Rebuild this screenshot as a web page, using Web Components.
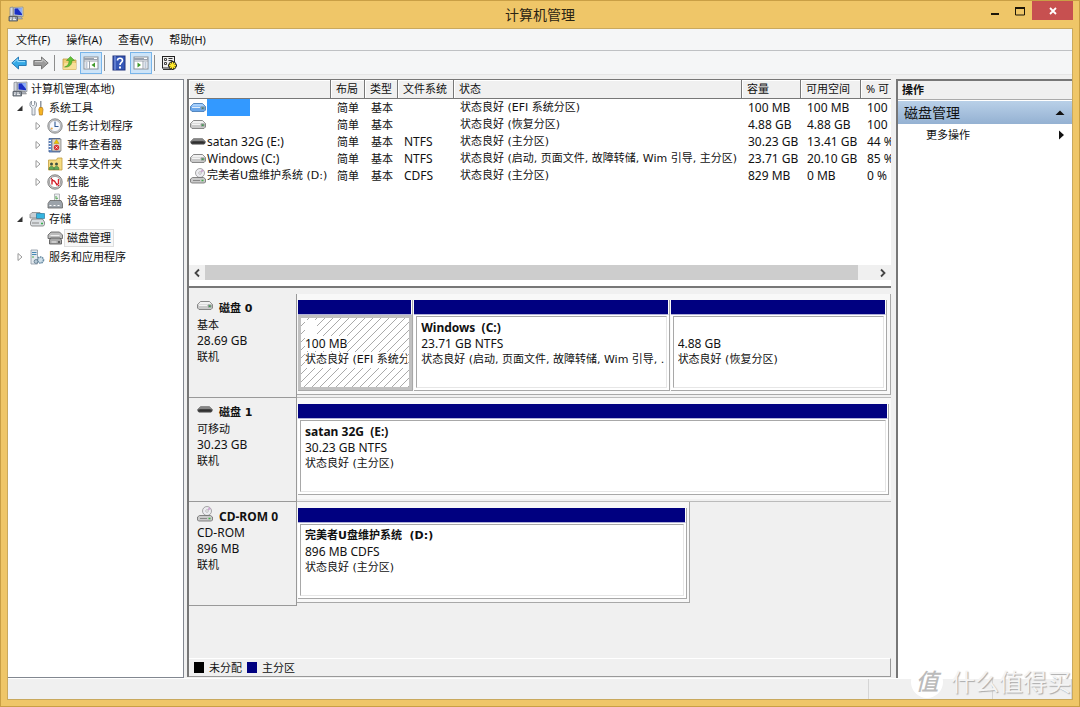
<!DOCTYPE html>
<html lang="zh-CN">
<head>
<meta charset="utf-8">
<title>计算机管理</title>
<style>
body{margin:0;font:11px/16px "Noto Sans","Noto Sans CJK SC",sans-serif;color:#111}
</style>
</head>
<body>
<cm-window caption="计算机管理">
  <cm-menubar slot="bars"></cm-menubar>
  <cm-toolbar slot="bars"></cm-toolbar>
  <cm-tree></cm-tree>
  <cm-main></cm-main>
  <cm-actions></cm-actions>
  <cm-status slot="status"></cm-status>
</cm-window>
<cm-watermark></cm-watermark>

<script>
const define = (name, html) => {
  const t = document.createElement('template');
  t.innerHTML = html;
  customElements.define(name, class extends HTMLElement {
    constructor() {
      super();
      this.attachShadow({mode: 'open'}).append(t.content.cloneNode(true));
    }
    connectedCallback() {
      for (const el of this.shadowRoot.querySelectorAll('[data-attr]')) {
        const value = this.getAttribute(el.dataset.attr) || '';
        if (el.localName === 'cm-icon') el.setAttribute('name', value);
        else el.textContent = value;
      }
    }
  });
};

const drive = (top, front, led, line) => `<path d="M3.500 3.500h9l3 3V10l-1.500 1.500H2L.5 10V6.500z" fill="${front}" stroke="${line}" stroke-width=".9"/><path d="M3.500 4h9l2.500 2.500H1z" fill="${top}"/><path d="M2 7.500h8" stroke="#fff" opacity=".8"/><path d="M11 6.500h3.500v3H11z" fill="#8d9791"/><rect x="12" y="7.500" width="1.500" height="1.500" fill="${led}"/>`;
const icons = {
  pc: `<path d="M2 1.500L5 1v9H2z" fill="#d4d8dd" stroke="#7c828a" stroke-width=".7"/><path d="M5.500 1.500L15 1v9.500l-9.500-1z" fill="#cfd6de" stroke="#7f8791" stroke-width=".7"/><path d="M6.500 2.500L14 2v7.200l-7.500-.8z" fill="#1a2fc4"/><path d="M9.500 2.300L14 2v6z" fill="#8eaef6"/><path d="M10 10.500h3l1.500 2.500H9z" fill="#aab0b8" stroke="#777" stroke-width=".5"/><path d="M1 10.500h8.500v4.500H1z" fill="#8b939d" stroke="#4c535c" stroke-width=".8"/><path d="M2 12h2M5 12h2M2 13.600h1.500M5 13.600h3" stroke="#fff" stroke-width=".9"/>`,
  back: `<path d="M.8 8l6.700-6v3.500h7.700v5H7.500V14z" fill="#35a9e6" stroke="#1c6fae" stroke-width=".9"/><path d="M2.500 7.700L6.800 4v2.600H14" fill="none" stroke="#9fe0ff"/>`,
  forward: `<path d="M15.200 8L8.500 2v3.500H.8v5h7.700V14z" fill="#9b9b9b" stroke="#6d6d6d" stroke-width=".9"/><path d="M2 6.600h7.200V4l4.300 3.700" fill="none" stroke="#cfcfcf"/>`,
  up: `<path d="M2 4h5l1 1h7v9.500H2z" fill="#f0cd74" stroke="#c09a45" stroke-width=".8"/><path d="M2 14.500L3.500 8H15v6.500z" fill="#f8df98"/><path d="M3.500 12c3.500-1 4.500-3.500 4.500-6.500H5.500L9.500 1.500l4 4H11c0 4.500-3 7-7.500 6.500z" fill="#62c136" stroke="#3c8b1c" stroke-width=".5"/>`,
  panel: `<rect x="1" y="2" width="14" height="12" fill="#fff" stroke="#8a8f98"/><path d="M1 3h14v2H1z" fill="#9aa2ae"/><path d="M11 3.500h3" stroke="#fff"/><path d="M6.500 6v8M1 6h14" stroke="#9aa2ae"/><path d="M2.500 8h2M2.500 10h2M2.500 12h2" stroke="#7d93b2"/><path d="M12 7.500v5L8.500 10z" fill="#3f9a2b"/>`,
  panelr: `<rect x="1" y="2" width="14" height="12" fill="#fff" stroke="#8a8f98"/><path d="M1 3h14v2H1z" fill="#9aa2ae"/><path d="M11 3.500h3" stroke="#fff"/><path d="M10 6v8M1 6h14" stroke="#9aa2ae"/><path d="M11.500 8h2M11.500 10h2M11.500 12h2" stroke="#7d93b2"/><path d="M4.500 7.500v5L8 10z" fill="#3f9a2b"/>`,
  help: `<rect x="2" y="1" width="12" height="14" fill="#3557b7" stroke="#22357f"/><path d="M4 1v14" stroke="#8aa3e6"/><path d="M6.500 5.500c0-3 5-3 5 0 0 2-2.500 2-2.500 4.500" fill="none" stroke="#fff" stroke-width="1.600"/><rect x="8" y="11.500" width="2" height="2" fill="#fff"/>`,
  settings: `<rect x="1.500" y="1.500" width="12" height="11.500" fill="#f1f1f1" stroke="#222"/><path d="M3.500 3.500h2v2h-2zM3.500 7.500h2v2h-2z" fill="none" stroke="#444"/><path d="M7.500 5.500h4M7.500 3.500h4" stroke="#333"/><path d="M2 14.500h8" stroke="#333"/><path d="M11.500 6v9M7 10.500h9M8.500 7.500l6 6M14.500 7.500l-6 6" stroke="#222" stroke-width="2.600"/><path d="M11.500 7v7M8 10.500h7M9 8l5 5M14 8l-5 5" stroke="#ffe82c" stroke-width="1.300"/>`,
  tools: `<path d="M2.500 1v3.500l1 1h1l1-1V1l2 2v3L6 8v7H3V8L1 6V3z" fill="#e6eaee" stroke="#7e8791" stroke-width=".8"/><path d="M11.800 1v7" stroke="#7e8791" stroke-width="1.300"/><path d="M10.500 7.500h2.800l.7 2-.7 5.500h-2.800l-.7-5.500z" fill="#f6b424" stroke="#b47814" stroke-width=".7"/>`,
  clock: `<circle cx="8" cy="8" r="7.200" fill="#c6c9cc" stroke="#777" stroke-width=".8"/><circle cx="8" cy="8" r="5.600" fill="#f5f9ff" stroke="#999" stroke-width=".6"/><path d="M8 3.500V8.500h3.500" fill="none" stroke="#315b94" stroke-width="1.100"/><circle cx="4.800" cy="10.500" r="1" fill="#e5a94e"/>`,
  events: `<path d="M2 1.500h11V15H2z" fill="#6f96d2" stroke="#3c5c91" stroke-width=".8"/><path d="M5 2h9v12H5z" fill="#d9d6cf" stroke="#666" stroke-width=".6"/><path d="M1.500 3.500h2.500M1.500 6.500h2.500M1.500 9.500h2.500M1.500 12.500h2.500" stroke="#fff"/><path d="M9.500 2.500l2.500 4H7z" fill="#efc400" stroke="#a58600" stroke-width=".4"/><circle cx="9.500" cy="10.500" r="2.700" fill="#d73232"/><path d="M8.500 9.500l2 2M10.500 9.500l-2 2" stroke="#fff" stroke-width=".8"/>`,
  share: `<path d="M1.500 4h8l1-2h4.500v12H1.500z" fill="#f6db80" stroke="#c29c3e" stroke-width=".8"/><circle cx="4.500" cy="8" r="1.500" fill="#3f5141"/><circle cx="9.500" cy="8" r="1.500" fill="#3f5141"/><path d="M2 13.500c0-4.500 5-4.500 5 0zM7 13.500c0-4.500 5-4.500 5 0z" fill="#5fa858" stroke="#356934" stroke-width=".5"/>`,
  perf: `<circle cx="8" cy="8" r="7.200" fill="#cecece" stroke="#666" stroke-width=".8"/><circle cx="8" cy="8" r="5.600" fill="#fff" stroke="#777" stroke-width=".6"/><path d="M5 10.500V6l2.500 1L10 11l1.500-1.500V5" fill="none" stroke="#d3202c" stroke-width="1.400"/><path d="M4 4l8 8" stroke="#d3202c"/>`,
  device: `<path d="M7.500 1h5v8h-5z" fill="#eceef0" stroke="#9b9fa3" stroke-width=".7"/><path d="M3 7.500h11l1.500 3V15H1v-4.500z" fill="#9ca3aa" stroke="#666" stroke-width=".8"/><path d="M2.500 12.500h2M6.500 12.500h2M10.500 12.500h2" stroke="#fff"/><path d="M9 3v3l2-1" fill="none" stroke="#52a552"/>`,
  storage: `<path d="M1 3.500L3 1.500h8l2 2V7H1z" fill="#c9ced3" stroke="#777" stroke-width=".7"/><path d="M7.500 2.500H15.500V7.500H7.500z" fill="#35b4e0" stroke="#176b93" stroke-width=".6"/><path d="M3 8h10.500l2 3v2.500l-1 1.500h-12l-1-1.500V11z" fill="#dadee1" stroke="#777" stroke-width=".8"/><path d="M3 12h7" stroke="#888"/><path d="M12 12.500h2" stroke="#34b24b" stroke-width="1.500"/>`,
  disks: `<path d="M4 2h8.500l3 3v3.500H1V5z" fill="#bdbdbd" stroke="#5c5c5c" stroke-width=".8"/><path d="M3.500 8h9.500l1.500 2v4h-12v-4z" fill="#a9a9a9" stroke="#4f4f4f" stroke-width=".8"/><path d="M3.500 5.500h9M4.500 12h5" stroke="#eee"/><path d="M11 12h2" stroke="#4a4a4a" stroke-width="1.500"/>`,
  services: `<path d="M2 1h6.500v14H2z" fill="#e3e9ee" stroke="#8b96a1" stroke-width=".8"/><path d="M3 3.500h4.500M3 5.500h4.500" stroke="#4587b4"/><path d="M3 8h2" stroke="#54a752"/><circle cx="11.500" cy="11" r="3" fill="#cfdfe9" stroke="#6a8ca4" stroke-width="1.600" stroke-dasharray="1.500 .7"/><circle cx="7" cy="12.500" r="1.900" fill="#b9cbd7" stroke="#627c90" stroke-width=".9"/>`,
  drive: drive('#f1f1f1', '#c9c9c9', '#3c9f4d', '#7d7d7d'),
  driveblue: drive('#a5cffc', '#6ba7ea', '#2d7e92', '#4b7fba'),
  removable: `<path d="M3.500 4.500h9l3 3V9L14 10.500H2L.5 9V7.500z" fill="#3f3f3f"/><path d="M3.500 4.500h9l3 3H.5z" fill="#858585"/><path d="M2.500 8h11" stroke="#222"/>`,
  cd: `<circle cx="10" cy="5" r="4.500" fill="#ececf0" stroke="#909090" stroke-width=".8"/><path d="M10 5l2-4 2 2z" fill="#cca6d0"/><circle cx="10" cy="5" r="1.300" fill="#fff" stroke="#888" stroke-width=".5"/><path d="M2.500 9.500h11l2 1.500v3l-1 1H1.500l-1-1v-3z" fill="#cacaca" stroke="#6b6b6b" stroke-width=".8"/><path d="M3 12.500h7" stroke="#888"/><path d="M11.500 12.500h2" stroke="#3fae46" stroke-width="1.500"/>`
};
customElements.define('cm-icon', class extends HTMLElement {
  static observedAttributes = ['name'];
  constructor() { super(); this.attachShadow({mode: 'open'}); }
  attributeChangedCallback(_, __, name) {
    this.shadowRoot.innerHTML = `<style>:host{display:block;flex:none;width:16px;height:16px}svg{display:block;width:100%;height:100%}</style><svg viewBox="0 0 16 16" aria-hidden="true">${icons[name] || ''}</svg>`;
  }
});

define('cm-window', `<style>
:host{display:flex;flex-direction:column;box-sizing:border-box;height:100vh;background:#efc668;border:1px solid #c99f45;padding:0 6px 6px}
header{display:grid;grid-template-columns:1fr auto 1fr;height:27px;flex:none}
.sys{padding:5px 1px}
h1{margin:0;font-weight:400;font-size:14px;line-height:27px;color:#2b2413}
.btns{display:flex;justify-content:flex-end;align-items:start}
button{border:0;padding:0;background:none;width:25px;height:19px;display:grid;place-items:center}
.close{background:#c75050;width:41px}
svg{width:12px;height:12px}
.client{flex:1;min-height:0;display:flex;flex-direction:column;border:1px solid #c9a95e;background:#f0f0f0}
.panes{flex:1;min-height:0;display:grid;grid-template-columns:176px minmax(0,1fr) 176px;padding-top:4px}
</style>
<header><cm-icon class="sys" name="pc"></cm-icon><h1 data-attr="caption"></h1>
<div class="btns"><button aria-label="最小化"><svg viewBox="0 0 12 12"><path d="M2 9h8" stroke="#1d1608" stroke-width="2"/></svg></button><button aria-label="最大化"><svg viewBox="0 0 12 12"><path d="M1.500 2v8h9V2" fill="none" stroke="#1d1608"/><path d="M1 3h10" stroke="#1d1608" stroke-width="2"/></svg></button><button class="close" aria-label="关闭"><svg viewBox="0 0 12 12"><path d="M3 3l6 6M9 3L3 9" stroke="#fff" stroke-width="1.800"/></svg></button></div></header>
<div class="client"><slot name="bars"></slot><main class="panes"><slot></slot></main><slot name="status"></slot></div>`);

define('cm-menubar', `<style>
:host{display:flex;flex:none;gap:16px;height:21px;padding:0 8px;background:#f5f6f7;border-bottom:1px solid #bfc1c4}
button{font:inherit;line-height:21px;color:inherit;border:0;padding:0;background:none}
</style><button>文件(F)</button><button>操作(A)</button><button>查看(V)</button><button>帮助(H)</button>`);

define('cm-toolbar', `<style>
:host{display:flex;flex:none;align-items:center;height:23px;background:#f5f6f7;border-bottom:1px solid #e6e6e6}
button{border:1px solid transparent;box-sizing:border-box;background:none;padding:0;width:22px;height:22px;display:grid;place-items:center}
.on{background:#cde4f8;border-color:#78b5ea}
hr{width:1px;height:16px;margin:0 3px 0 2px;border:0;background:#8d8d8d}
</style><button aria-label="后退"><cm-icon name="back"></cm-icon></button><button aria-label="前进"><cm-icon name="forward"></cm-icon></button><hr><button aria-label="向上"><cm-icon name="up"></cm-icon></button><button class="on" aria-label="控制台树"><cm-icon name="panel"></cm-icon></button><hr><button aria-label="帮助"><cm-icon name="help"></cm-icon></button><button class="on" aria-label="操作窗格"><cm-icon name="panelr"></cm-icon></button><hr><button aria-label="设置"><cm-icon name="settings"></cm-icon></button>`);

define('cm-node', `<style>
:host{display:flex;flex:1;align-items:center}
:host([level="1"]){padding-left:4px}:host([level="2"]){padding-left:22px}
svg{width:8px;height:8px;flex:none;margin:0 5px 0 4px;visibility:hidden}
:host([level="0"]) svg{display:none}:host([level="0"]) cm-icon{margin-left:4px}
.shut,.open{display:none}
:host([state]) svg{visibility:visible}
:host([state="open"]) .open,:host([state="shut"]) .shut{display:block}
button{font:inherit;line-height:16px;color:inherit;border:1px solid transparent;background:none;padding:0 2px;margin-left:1px}
:host([level="0"]) button{margin-left:0}
:host([selected]) button{background:#f7f7f7;border-color:#dedede}
</style><svg viewBox="0 0 8 8"><path class="open" d="M6.500 1.500v5.500H1z" fill="#333"/><path class="shut" d="M2 .5v7L6 4z" fill="#fff" stroke="#999"/></svg><cm-icon data-attr="icon"></cm-icon><button><slot></slot></button>`);

define('cm-tree', `<style>
:host{display:block;background:#fff;border:1px solid #828790;border-left:0}
nav{display:flex;flex-direction:column;height:186px}
</style><nav>
<cm-node level="0" icon="pc">计算机管理(本地)</cm-node>
<cm-node level="1" state="open" icon="tools">系统工具</cm-node>
<cm-node level="2" state="shut" icon="clock">任务计划程序</cm-node>
<cm-node level="2" state="shut" icon="events">事件查看器</cm-node>
<cm-node level="2" state="shut" icon="share">共享文件夹</cm-node>
<cm-node level="2" state="shut" icon="perf">性能</cm-node>
<cm-node level="2" icon="device">设备管理器</cm-node>
<cm-node level="1" state="open" icon="storage">存储</cm-node>
<cm-node level="2" icon="disks" selected>磁盘管理</cm-node>
<cm-node level="1" state="shut" icon="services">服务和应用程序</cm-node></nav>`);

define('cm-volumes', `<style>
:host{display:flex;flex-direction:column;height:206px;background:#fff;border-bottom:2px solid #777;overflow:hidden}
table{border-collapse:separate;border-spacing:0;table-layout:fixed;width:100%}
th,td{padding:0 0 0 6px;overflow:hidden;white-space:nowrap;text-align:left;font-weight:400;height:17px;line-height:17px}
th{background:#f0f0f0;height:18px;line-height:18px;padding-left:5px;border-right:1px solid #777;border-bottom:1px solid #777;box-shadow:inset 1px 1px #fff}
th:last-child{border-right:0}
td:first-child{padding-left:1px}
.n{display:flex;align-items:center;gap:1px;height:17px}
.sel{background:#3399ff;width:43px;height:17px}
.en{font-size:12px;line-height:16px}.mix{font-family:"DejaVu Sans","Noto Sans CJK SC",sans-serif}
.scroll{margin-top:auto;display:flex;height:15px;margin-bottom:6px;background:#f0f0f0}
.scroll button{border:0;background:none;width:16px;padding:0;display:grid;place-items:center}
.scroll svg{width:8px;height:10px}
.track{flex:1;padding-right:17px}.thumb{height:15px;background:#cdcdcd}
</style>
<table><colgroup><col style="width:142px"><col style="width:34px"><col style="width:33px"><col style="width:56px"><col><col style="width:59px"><col style="width:60px"><col style="width:30px"></colgroup>
<thead><tr><th>卷</th><th>布局</th><th>类型</th><th>文件系统</th><th>状态</th><th>容量</th><th>可用空间</th><th>% 可</th></tr></thead>
<tbody>
<tr><td><div class="n"><cm-icon name="driveblue"></cm-icon><span class="sel"></span></div></td><td>简单</td><td>基本</td><td></td><td class="mix">状态良好 (EFI 系统分区)</td><td class="en">100 MB</td><td class="en">100 MB</td><td class="en">100 %</td></tr>
<tr><td><div class="n"><cm-icon name="drive"></cm-icon></div></td><td>简单</td><td>基本</td><td></td><td class="mix">状态良好 (恢复分区)</td><td class="en">4.88 GB</td><td class="en">4.88 GB</td><td class="en">100 %</td></tr>
<tr><td><div class="n en"><cm-icon name="removable"></cm-icon><span>satan 32G (E:)</span></div></td><td>简单</td><td>基本</td><td class="en">NTFS</td><td class="mix">状态良好 (主分区)</td><td class="en">30.23 GB</td><td class="en">13.41 GB</td><td class="en">44 %</td></tr>
<tr><td><div class="n en"><cm-icon name="drive"></cm-icon><span>Windows (C:)</span></div></td><td>简单</td><td>基本</td><td class="en">NTFS</td><td class="mix">状态良好 (启动, 页面文件, 故障转储, Wim 引导, 主分区)</td><td class="en">23.71 GB</td><td class="en">20.10 GB</td><td class="en">85 %</td></tr>
<tr><td><div class="n mix"><cm-icon name="cd"></cm-icon><span>完美者U盘维护系统 (D:)</span></div></td><td>简单</td><td>基本</td><td class="en">CDFS</td><td class="mix">状态良好 (主分区)</td><td class="en">829 MB</td><td class="en">0 MB</td><td class="en">0 %</td></tr>
</tbody></table>
<div class="scroll"><button aria-label="向左"><svg viewBox="0 0 8 10"><path d="M6 1.500L2.500 5 6 8.500" fill="none" stroke="#444" stroke-width="1.800"/></svg></button><div class="track"><div class="thumb"></div></div><button aria-label="向右"><svg viewBox="0 0 8 10"><path d="M2 1.500L5.500 5 2 8.500" fill="none" stroke="#444" stroke-width="1.800"/></svg></button></div>`);

define('cm-volume', `<style>
:host{display:flex;flex-direction:column;min-width:0;border-right:1px solid #a8a8a8;border-bottom:1px solid #a8a8a8;background:#fff}
.bar{height:14px;background:#000080;border-right:1px solid #fff;border-bottom:1px solid #b0b0d8}
.box{flex:1;min-height:0;margin:1px 2px 2px;border:1px solid #a8a8a8;border-right-color:#e6e6e6;border-bottom-color:#e6e6e6;padding:3px 0 0 4px;overflow:hidden}
p{margin:0;white-space:nowrap;overflow:hidden;height:16px}
p span{display:inline-block;background:#fff}
.title{font-weight:700;font-family:"DejaVu Sans","Noto Sans CJK SC",sans-serif}.size{font-size:12px;line-height:15px}
:host([latin]) .title{font-size:12px;font-family:"Noto Sans",sans-serif;line-height:15px}
.state{font-family:"DejaVu Sans","Noto Sans CJK SC",sans-serif}
:host([selected]) .box{margin:0;border:3px solid #c0c0c0;padding:2px 2px 0 4px;background:linear-gradient(135deg,transparent 45%,#aaa 45% 55%,transparent 55%) 0 0/8px 8px #fff}
:host([selected]) .title span{width:12px;height:16px}
</style><div class="bar"></div><div class="box"><p class="title"><span><slot></slot></span></p><p class="size"><span data-attr="size"></span></p><p class="state"><span data-attr="state"></span></p></div>`);

define('cm-disk', `<style>
:host{display:grid;grid-template-columns:108px minmax(0,1fr);height:104px;box-sizing:border-box}
.label{border-right:1px solid #999;border-bottom:1px solid #999;padding:7px 0 0 8px}
.name{display:flex;gap:6px;height:16px;font-weight:700;font-size:12px}
.name cm-icon{margin-top:-3px}
p{margin:0}.en,:host([latin]) .kind{font-size:12px}
:host(:not([latin])) .name{font:700 11px/16px "DejaVu Sans","Noto Sans CJK SC",sans-serif}
.vols{display:grid;grid-template-columns:var(--cols,1fr);gap:1px;box-sizing:border-box;width:var(--span,100%);height:101px;padding:6px 2px 3px 1px;border-right:1px solid #a8a8a8;border-bottom:1px solid #a8a8a8;background:#f8f8f8}
:host(.full) .vols{border-color:transparent;padding-right:1px}
:host(.first) .vols{padding-right:3px}
.right{border-bottom:1px solid #bbb}
:host(.cd) .right{border-bottom-color:transparent}
</style><section class="label"><div class="name"><cm-icon data-attr="icon"></cm-icon><span data-attr="name"></span></div><p class="kind" data-attr="kind"></p><p class="en" data-attr="size"></p><p>联机</p></section>
<div class="right"><div class="vols"><slot></slot></div></div>`);

define('cm-main', `<style>
:host{display:flex;flex-direction:column;margin:0 5px 1px 3px;border-left:2px solid #777;border-top:1px solid #777;background:#f0f0f0;min-width:0}
.disks{flex:1;min-height:0;padding-top:6px}
.full{--span:100%}.first{--cols:115fr 255fr 216fr}.cd{--span:393px}
footer{display:flex;align-items:center;gap:5px;height:17px;padding:0 5px;border-top:1px solid #fff;border-right:1px solid #999;border-bottom:1px solid #999}
i{width:10px;height:11px;background:#000}.p{background:#000080}
</style><cm-volumes></cm-volumes>
<div class="disks">
<cm-disk class="first" icon="drive" name="磁盘 0" kind="基本" size="28.69 GB"><cm-volume selected size="100 MB" state="状态良好 (EFI 系统分区)"></cm-volume><cm-volume latin size="23.71 GB NTFS" state="状态良好 (启动, 页面文件, 故障转储, Wim 引导, .">Windows&nbsp; (C:)</cm-volume><cm-volume size="4.88 GB" state="状态良好 (恢复分区)"></cm-volume></cm-disk>
<cm-disk class="full" icon="removable" name="磁盘 1" kind="可移动" size="30.23 GB"><cm-volume latin size="30.23 GB NTFS" state="状态良好 (主分区)">satan 32G&nbsp; (E:)</cm-volume></cm-disk>
<cm-disk class="cd" latin icon="cd" name="CD-ROM 0" kind="CD-ROM" size="896 MB"><cm-volume size="896 MB CDFS" state="状态良好 (主分区)">完美者U盘维护系统&nbsp; (D:)</cm-volume></cm-disk>
</div>
<footer><i></i><span>未分配</span><i class="p"></i><span>主分区</span></footer>`);

define('cm-actions', `<style>
:host{display:block;background:#fff;border-left:2px solid #777;border-top:2px solid #777}
h2{margin:0;font-size:11px;line-height:18px;height:18px;padding-left:4px;background:#f0f0f0;border-bottom:1px solid #aaa}
button{display:flex;align-items:center;justify-content:space-between;width:100%;border:0;font:inherit;color:inherit;text-align:left;height:22px}
.group{height:23px;margin-top:1px;padding:0 7px 0 6px;font-size:14px;background:linear-gradient(#b9d0e8,#94b1d2)}
.more{background:none;padding:0 7px 0 28px}
svg{width:10px;height:10px}
</style><h2>操作</h2><button class="group">磁盘管理<svg viewBox="0 0 10 10"><path d="M.5 7h9L5 2.500z" fill="#111"/></svg></button><button class="more">更多操作<svg viewBox="0 0 10 10"><path d="M4 .5v9L9 5z" fill="#111"/></svg></button>`);

define('cm-status', `<style>
:host{display:grid;grid-template-columns:1fr 124px 79px;flex:none;height:20px;border-top:1px solid #fff}
span{border-right:1px solid #d5d5d5}
</style><span></span><span></span><span></span>`);

define('cm-watermark', `<style>
:host{position:absolute;right:9px;bottom:9px;display:flex;align-items:center;gap:8px;pointer-events:none}
b{width:32px;height:32px;border-radius:50%;background:#fff;font-weight:500;font-size:23px;line-height:31px;text-align:center;color:#bbb;font-style:italic}
span{font-size:24px;line-height:32px;color:#f4f4f4;text-shadow:1px 1px 1px #aaa}
</style><b>值</b><span>什么值得买</span>`);
</script>
</body>
</html>
